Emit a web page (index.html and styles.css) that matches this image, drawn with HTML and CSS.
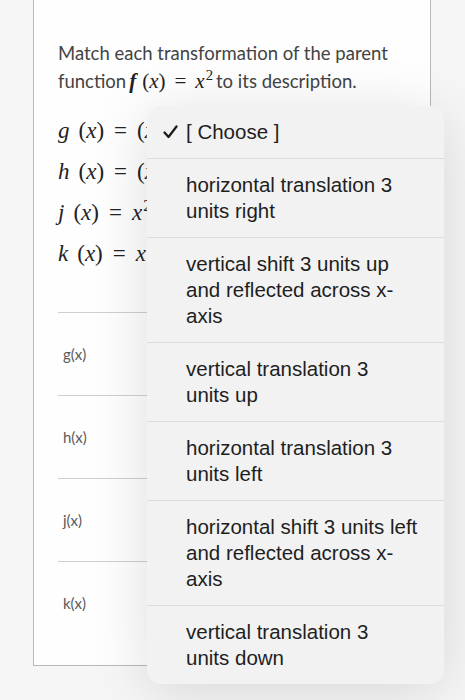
FILE: index.html
```html
<!DOCTYPE html>
<html lang="en">
<head>
  <meta charset="UTF-8">
  <meta name="viewport" content="width=device-width, initial-scale=1.0">
  <title>Matching Question</title>
  <link rel="stylesheet" href="styles.css">
</head>
<body>
  <div class="card">
    <p class="prompt">Match each transformation of the parent function<span class="math"><i class="fn name">f</i>(<i>x</i>)<span class="op">=</span><i>x</i><sup>2</sup></span>to its description.</p>
    <div class="equations">
      <div class="eq"><i class="name">g</i>(<i>x</i>)<span class="op">=</span>(<i>x</i><span class="op">&minus;</span>3)<sup>2</sup></div>
      <div class="eq"><i class="name">h</i>(<i>x</i>)<span class="op">=</span>(<i>x</i><span class="op">+</span>3)<sup>2</sup></div>
      <div class="eq"><i class="name">j</i>(<i>x</i>)<span class="op">=</span><i>x</i><sup>2</sup><span class="op">+</span>3</div>
      <div class="eq"><i class="name">k</i>(<i>x</i>)<span class="op">=</span><i>x</i><sup>2</sup><span class="op">&minus;</span>3</div>
    </div>
    <div class="rows">
      <div class="row"><span class="label">g(x)</span></div>
      <div class="row"><span class="label">h(x)</span></div>
      <div class="row"><span class="label">j(x)</span></div>
      <div class="row"><span class="label">k(x)</span></div>
    </div>
  </div>

  <ul class="menu">
    <li class="option selected">
      <svg class="check" width="15" height="14" viewBox="0 0 15 14"><polyline points="1.5,7.5 5.5,12 13.5,1.5" fill="none" stroke="#1c1c1c" stroke-width="2.3" stroke-linecap="round" stroke-linejoin="round"/></svg>
      [ Choose ]
    </li>
    <li class="option">horizontal translation 3<br>units right</li>
    <li class="option">vertical shift 3 units up<br>and reflected across x-<br>axis</li>
    <li class="option">vertical translation 3<br>units up</li>
    <li class="option">horizontal translation 3<br>units left</li>
    <li class="option">horizontal shift 3 units left<br>and reflected across x-<br>axis</li>
    <li class="option">vertical translation 3<br>units down</li>
  </ul>
</body>
</html>
```

FILE: styles.css
```css
body, html {
  margin: 0;
  height: 100%;
  background-color: #f6f6f6;
}
.card {
  margin-left: 33px;
  width: 372px;
  background-color: #fefefe;
  border: 1px solid #b9b9b9;
  border-top: none;
  padding: 39px 0 21px 24px;
}
.prompt {
  margin: 0;
  width: 350px;
  font-family: Lato, "Open Sans", sans-serif;
  font-size: 18.5px;
  line-height: 28px;
  color: #434343;
}
.math {
  font-family: "Liberation Serif", "DejaVu Serif", serif;
  font-size: 21px;
  line-height: 20px;
  color: #222;
  margin: 0 3px 0 3px;
}
.math .fn {
  font-weight: bold;
}
.name {
  margin-right: 6px;
}
.op {
  margin: 0 9px;
}
sup {
  font-size: 0.7em;
  line-height: 0;
  margin-left: 1px;
}
.equations {
  margin-top: 15px;
}
.eq {
  font-family: "Liberation Serif", "DejaVu Serif", serif;
  font-size: 23px;
  line-height: 41px;
  color: #222;
  white-space: nowrap;
}
.eq .name {
  margin-right: 9px;
}
.eq .op {
  margin: 0 10px;
}
.rows {
  margin-top: 38px;
}
.row {
  height: 82px;
  border-top: 1px solid #cfcfcf;
  display: flex;
  align-items: center;
}
.label {
  margin-left: 5px;
  font-family: Lato, "Open Sans", sans-serif;
  font-size: 15px;
  color: #5a5a5a;
}
.menu {
  position: absolute;
  top: 106px;
  left: 147px;
  width: 297px;
  margin: 0;
  padding: 0;
  list-style: none;
  background-color: #f2f2f2;
  border-radius: 14px;
  box-shadow: 0 8px 60px rgba(0, 0, 0, 0.13);
  overflow: hidden;
}
.option {
  position: relative;
  padding: 13px 10px 13px 39px;
  font-family: "Liberation Sans", Arial, sans-serif;
  font-size: 20.5px;
  line-height: 26px;
  color: #1e1e1e;
  border-top: 1px solid #dcdcdc;
}
.option:first-child {
  border-top: none;
}
.check {
  position: absolute;
  left: 16px;
  top: 19px;
}
```
